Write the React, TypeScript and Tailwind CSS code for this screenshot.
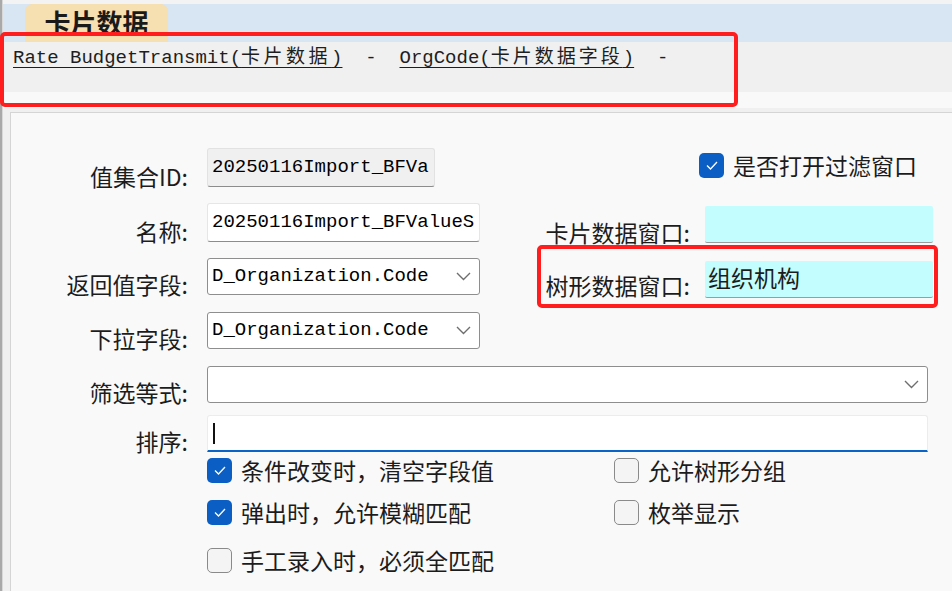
import React from "react";

const CJK = "font-['Noto_Sans_CJK_SC','Noto_Sans',sans-serif]";
const MONO = "font-['Liberation_Mono','Noto_Sans_CJK_SC',monospace]";

function Chevron() {
  return (
    <svg width="15" height="9" viewBox="0 0 15 9" className="shrink-0">
      <polyline points="1,1 7.5,7.5 14,1" fill="none" stroke="#6e6e6e" strokeWidth="1.4" />
    </svg>
  );
}

function Check({ checked, label }: { checked: boolean; label: string }) {
  return (
    <div className="flex items-center h-[25px]">
      {checked ? (
        <div className="w-[25px] h-[25px] rounded-[5px] bg-[#0b5fc4] flex items-center justify-center shrink-0">
          <svg width="14" height="11" viewBox="0 0 14 11">
            <polyline points="2,5.5 5.5,9 12,2" fill="none" stroke="#ffffff" strokeWidth="1.3" />
          </svg>
        </div>
      ) : (
        <div className="w-[25px] h-[25px] rounded-[5px] bg-[#f4f4f4] border-[1.5px] border-[#8a8a8a] shrink-0" />
      )}
      <span className={`${CJK} ml-[9px] text-[23px] leading-[25px] text-[#1c1c1c] whitespace-nowrap`}>{label}</span>
    </div>
  );
}

function Label({ text, w = "w-[179px]" }: { text: string; w?: string }) {
  return (
    <div className={`${CJK} ${w} shrink-0 text-right text-[23px] leading-[22px] text-[#1c1c1c] whitespace-nowrap pr-[2px]`}>
      {text}
    </div>
  );
}

export default function App() {
  return (
    <div className="relative w-[952px] h-[591px] overflow-hidden bg-[#f0f0f0] flex">
      <div className="w-[3px] h-full bg-[#a9a9a9] border-r border-[#d8d8d8] shrink-0" />
      <div className="flex-1 flex flex-col min-w-0">
        <div className="h-[4px] bg-[#f3f3f3]" />
        <div className="h-[38px] bg-[#d8e6f3] pl-[22px] flex">
          <div className={`${CJK} w-[143px] h-full bg-[#f6dfb1] rounded-t-[7px] flex items-center justify-center text-[26px] font-bold text-[#1a1a1a] leading-none pb-[2px]`}>
            卡片数据
          </div>
        </div>
        <div className="h-[50px] bg-[#f0f0f0] pl-[10px] pt-[4px]">
          <div className={`${MONO} text-[19px] leading-[24px] text-[#1e1e1e] whitespace-pre`}>
            <span className="underline underline-offset-[4px] decoration-1">
              Rate BudgetTransmit(<span className="tracking-[3.5px]">卡片数据</span>)
            </span>
            {"  -  "}
            <span className="underline underline-offset-[4px] decoration-1">
              OrgCode(<span className="tracking-[3px]">卡片数据字段</span>)
            </span>
            {"  -"}
          </div>
        </div>
        <div className="h-[16px] bg-[#f9f9f9]" />
        <div className="h-[4px] bg-[#f0f0f0]" />
        <div className="flex-1 ml-[7px] border-l border-t border-[#d5d5d5] bg-[#f9f9f9] pt-[35px] flex flex-col">
          {/* top section */}
          <div className="flex">
            <div className="w-[469px] shrink-0 flex flex-col">
              <div className="flex items-end">
                <Label text="值集合ID:" />
                <div className={`${MONO} ml-[17px] w-[228px] h-[39px] bg-[#f0f0f0] border border-[#e2e2e2] border-b-[#8c8c8c] rounded-[3px] pl-[4px] flex items-center text-[19px] text-black whitespace-nowrap`}>
                  20250116Import_BFVa
                </div>
              </div>
              <div className="flex items-end mt-[16px]">
                <Label text="名称:" />
                <div className={`${MONO} ml-[17px] w-[273px] h-[39px] bg-white border border-[#e6e6e6] border-b-[#8c8c8c] rounded-[3px] pl-[4px] flex items-center text-[19px] text-black whitespace-nowrap`}>
                  20250116Import_BFValueS
                </div>
              </div>
              <div className="flex items-end mt-[16px]">
                <Label text="返回值字段:" />
                <div className={`${MONO} ml-[17px] w-[273px] h-[37px] bg-white border border-[#8e8e8e] rounded-[3px] pl-[4px] pr-[8px] flex items-center justify-between text-[19px] text-black whitespace-nowrap`}>
                  <span>D_Organization.Code</span>
                  <Chevron />
                </div>
              </div>
              <div className="flex items-end mt-[17px]">
                <Label text="下拉字段:" />
                <div className={`${MONO} ml-[17px] w-[273px] h-[37px] bg-white border border-[#8e8e8e] rounded-[3px] pl-[4px] pr-[8px] flex items-center justify-between text-[19px] text-black whitespace-nowrap`}>
                  <span>D_Organization.Code</span>
                  <Chevron />
                </div>
              </div>
            </div>
            <div className="ml-[57px] flex flex-col">
              <div className="mt-[5px] pl-[162px]">
                <Check checked label="是否打开过滤窗口" />
              </div>
              <div className="flex items-end mt-[28px]">
                <Label text="卡片数据窗口:" w="w-[155px]" />
                <div className="ml-[13px] w-[228px] h-[37px] bg-[#c4fdfd] border-b border-[#9c9c9c] rounded-[2px]" />
              </div>
              <div className="flex items-end mt-[18px]">
                <div className="mb-[2px]">
                  <Label text="树形数据窗口:" w="w-[155px]" />
                </div>
                <div className={`${CJK} ml-[13px] w-[228px] h-[37px] bg-[#c4fdfd] border-b border-[#9c9c9c] rounded-[2px] pl-[3px] pb-[4px] flex items-center text-[23px] text-[#1c1c1c]`}>
                  组织机构
                </div>
              </div>
            </div>
          </div>
          {/* row 5 */}
          <div className="flex items-end mt-[17px]">
            <Label text="筛选等式:" />
            <div className="ml-[17px] w-[721px] h-[37px] bg-white border border-[#8e8e8e] rounded-[3px] pr-[8px] flex items-center justify-end">
              <Chevron />
            </div>
          </div>
          {/* row 6 */}
          <div className="flex items-end mt-[12px]">
            <Label text="排序:" />
            <div className="ml-[17px] w-[721px] h-[37px] bg-white border border-[#ececec] border-b-2 border-b-[#0a63c6] rounded-t-[3px] pl-[5px] flex items-center">
              <div className="w-[2px] h-[21px] bg-[#111]" />
            </div>
          </div>
          {/* checkboxes */}
          <div className="ml-[196px] mt-[6px] flex">
            <div className="flex flex-col w-[407px]">
              <Check checked label="条件改变时，清空字段值" />
              <div className="mt-[17px]">
                <Check checked label="弹出时，允许模糊匹配" />
              </div>
              <div className="mt-[23px]">
                <Check checked={false} label="手工录入时，必须全匹配" />
              </div>
            </div>
            <div className="flex flex-col">
              <Check checked={false} label="允许树形分组" />
              <div className="mt-[17px]">
                <Check checked={false} label="枚举显示" />
              </div>
            </div>
          </div>
        </div>
      </div>
      {/* annotation boxes */}
      <div className="absolute left-0 top-[32px] w-[738px] h-[75px] border-4 border-[#ff1d1d] rounded-[5px] pointer-events-none" />
      <div className="absolute left-[537px] top-[245px] w-[401px] h-[63px] border-4 border-[#ff1d1d] rounded-[5px] pointer-events-none" />
    </div>
  );
}
